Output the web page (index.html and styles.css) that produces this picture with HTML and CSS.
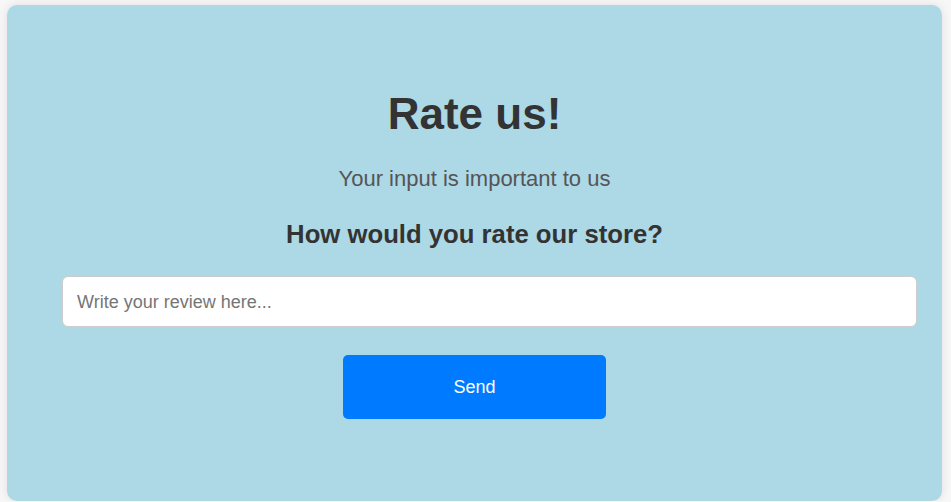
FILE: index.html
```html
<!DOCTYPE html>
<html lang="en">
<head>
<meta charset="utf-8">
<title>Rate us!</title>
<link rel="stylesheet" href="styles.css">
</head>
<body>
<main class="card">
  <h1 class="title">Rate us!</h1>
  <p class="subtitle">Your input is important to us</p>
  <h2 class="question">How would you rate our store?</h2>
  <input class="review" type="text" placeholder="Write your review here...">
  <button class="send" type="button">Send</button>
</main>
</body>
</html>
```

FILE: styles.css
```css
html, body {
  margin: 0;
  background: #f7f7f7;
}
body {
  padding: 5px 9px 0 7px;
  font-family: "Liberation Sans", Arial, sans-serif;
}
.card {
  box-sizing: border-box;
  width: 935px;
  height: 496px;
  background: #add8e6;
  border-radius: 10px;
  box-shadow: 0 0 10px rgba(0, 0, 0, 0.1);
  padding: 87px 55px 0;
  display: flex;
  flex-direction: column;
  align-items: stretch;
}
.title {
  margin: 0;
  font-size: 44px;
  line-height: 1;
  font-weight: bold;
  color: #333;
  text-align: center;
}
.subtitle {
  margin: 32px 0 0;
  font-size: 22px;
  line-height: 1;
  color: #555;
  text-align: center;
}
.question {
  margin: 32px 0 0;
  font-size: 25.7px;
  line-height: 1;
  font-weight: bold;
  color: #333;
  text-align: center;
}
.review {
  margin: 28px 0 0;
  width: 100%;
  height: 47px;
  padding: 2px 14px 0;
  border: 1px solid #ccc;
  border-radius: 6px;
  background: #fff;
  font-family: "Liberation Sans", Arial, sans-serif;
  font-size: 18px;
  color: #333;
  outline: none;
}
.review::placeholder {
  color: #757575;
}
.send {
  align-self: center;
  margin-top: 28px;
  width: 263px;
  height: 64px;
  padding: 2px 0 0;
  border: none;
  border-radius: 5px;
  background: #007bff;
  color: #fff;
  font-family: "Liberation Sans", Arial, sans-serif;
  font-size: 18px;
  cursor: pointer;
}
```
